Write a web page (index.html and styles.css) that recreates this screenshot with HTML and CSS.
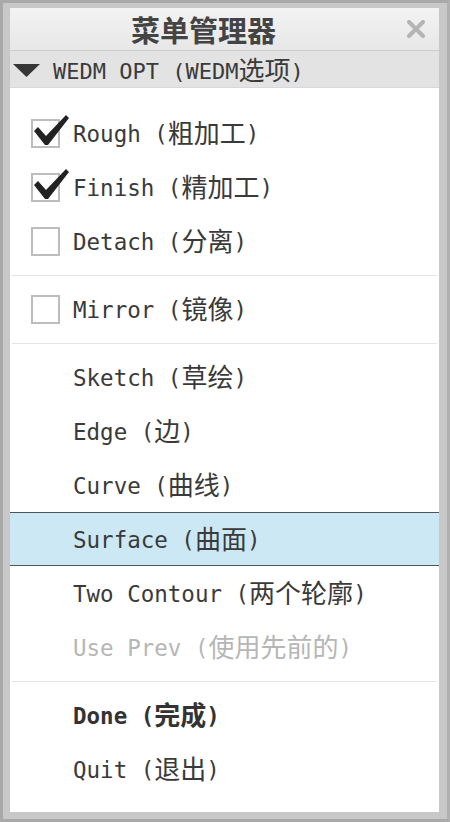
FILE: index.html
```html
<!DOCTYPE html>
<html lang="zh-CN">
<head>
<meta charset="utf-8">
<title>菜单管理器</title>
<link rel="stylesheet" href="styles.css">
</head>
<body>
<div class="window">
  <div class="titlebar">
    <span class="title">菜单管理器</span>
    <svg class="close" width="18" height="18" viewBox="0 0 18 18"><path d="M2 2 L16 16 M16 2 L2 16" stroke="#b4b4b4" stroke-width="4" stroke-linecap="round"/></svg>
  </div>
  <div class="subhead">
    <svg class="tri" width="27" height="13" viewBox="0 0 27 13"><polygon points="0,0 27,0 13.5,13" fill="#363636"/></svg>
    <span class="lbl">WEDM OPT (WEDM<span class="zh">选项</span>)</span>
  </div>
  <div class="menu">
    <div class="group">
      <div class="item">
        <svg class="cb" width="40" height="36" viewBox="0 0 40 36"><rect x="1" y="6" width="27" height="27" fill="#fff" stroke="#bdbdbd" stroke-width="2"/><polygon points="3,17 7,13 15,22 35,1 38,4 17,31 14,31" fill="#222"/></svg>
        <span class="lbl">Rough (<span class="zh">粗加工</span>)</span>
      </div>
      <div class="item">
        <svg class="cb" width="40" height="36" viewBox="0 0 40 36"><rect x="1" y="6" width="27" height="27" fill="#fff" stroke="#bdbdbd" stroke-width="2"/><polygon points="3,17 7,13 15,22 35,1 38,4 17,31 14,31" fill="#222"/></svg>
        <span class="lbl">Finish (<span class="zh">精加工</span>)</span>
      </div>
      <div class="item">
        <svg class="cb" width="40" height="36" viewBox="0 0 40 36"><rect x="1" y="6" width="27" height="27" fill="#fff" stroke="#bdbdbd" stroke-width="2"/></svg>
        <span class="lbl">Detach (<span class="zh">分离</span>)</span>
      </div>
    </div>
    <div class="sep"></div>
    <div class="group">
      <div class="item">
        <svg class="cb" width="40" height="36" viewBox="0 0 40 36"><rect x="1" y="6" width="27" height="27" fill="#fff" stroke="#bdbdbd" stroke-width="2"/></svg>
        <span class="lbl">Mirror (<span class="zh">镜像</span>)</span>
      </div>
    </div>
    <div class="sep"></div>
    <div class="group">
      <div class="item plain"><span class="lbl">Sketch (<span class="zh">草绘</span>)</span></div>
      <div class="item plain"><span class="lbl">Edge (<span class="zh">边</span>)</span></div>
      <div class="item plain"><span class="lbl">Curve (<span class="zh">曲线</span>)</span></div>
      <div class="item plain selected"><span class="lbl">Surface (<span class="zh">曲面</span>)</span></div>
      <div class="item plain"><span class="lbl">Two Contour (<span class="zh">两个轮廓</span>)</span></div>
      <div class="item plain disabled"><span class="lbl">Use Prev (<span class="zh">使用先前的</span>)</span></div>
    </div>
    <div class="sep"></div>
    <div class="group">
      <div class="item plain bold"><span class="lbl">Done (<span class="zh">完成</span>)</span></div>
      <div class="item plain"><span class="lbl">Quit (<span class="zh">退出</span>)</span></div>
    </div>
  </div>
</div>
</body>
</html>
```
FILE: styles.css
```css
* { box-sizing: border-box; }
html, body { margin: 0; padding: 0; }
body {
  width: 450px;
  height: 822px;
  background: #c7c7c7;
  overflow: hidden;
}
.window {
  width: 450px;
  height: 822px;
  border: 3px solid #a9a9a9;
  border-right-color: #b0b0b0;
  padding: 5px 8px 7px 7px;
  background: #c8c8c8;
  display: flex;
  flex-direction: column;
}
.titlebar {
  height: 43px;
  flex: none;
  display: flex;
  align-items: center;
  background: linear-gradient(#f3f3f3, #e7e7e7);
  border-bottom: 1px solid #cdcdcd;
}
.title {
  flex: 1;
  text-align: center;
  padding-right: 10px;
  font-family: "Noto Sans CJK SC", sans-serif;
  font-weight: 700;
  font-size: 29px;
  color: #444;
  line-height: 1;
}
.close {
  flex: none;
  margin-right: 14px;
}
.subhead {
  height: 37px;
  flex: none;
  display: flex;
  align-items: center;
  padding-left: 3px;
  gap: 13px;
  background: #e3e3e3;
  border-bottom: 1px solid #d8d8d8;
}
.tri { flex: none; margin-top: 2px; }
.lbl {
  font-family: "DejaVu Sans Mono", "Liberation Mono", monospace;
  font-size: 22.5px;
  color: #3a3a3a;
  white-space: pre;
  line-height: 1;
}
.subhead .lbl { font-size: 22px; }
.zh {
  font-family: "Noto Sans CJK SC", sans-serif;
  font-size: 26px;
  vertical-align: -1px;
}
.menu {
  flex: 1;
  background: #fff;
  padding-top: 18px;
}
.item {
  height: 54px;
  display: flex;
  align-items: center;
  padding-left: 21px;
  padding-bottom: 2px;
  gap: 2px;
}
.item.plain { padding-left: 63px; }
.cb { flex: none; }
.item.selected {
  background: #cde8f5;
  border-top: 1px solid #4d555c;
  border-bottom: 1px solid #4d555c;
}
.item.disabled .lbl { color: #b6b6b6; }
.item.bold .lbl { font-weight: 700; color: #333; }
.sep {
  height: 1px;
  background: #e4e4e4;
  margin: 7px 2px 6px 2px;
}
```
